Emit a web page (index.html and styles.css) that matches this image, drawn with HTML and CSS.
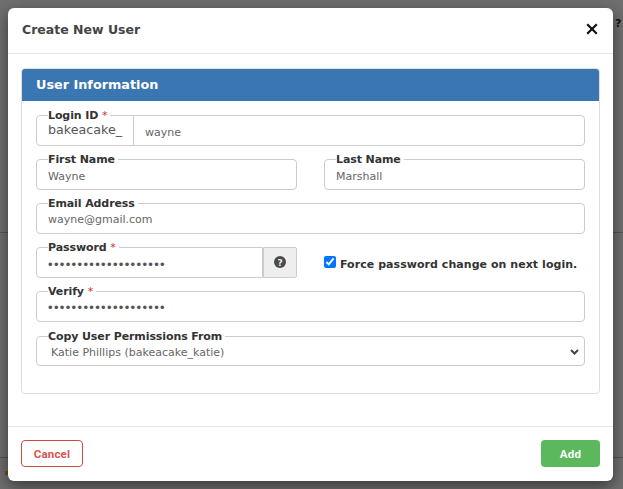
FILE: index.html
```html
<!DOCTYPE html>
<html lang="en">
<head>
    <meta charset="UTF-8">
    <title>Create New User</title>
    <link rel="stylesheet" href="styles.css">
</head>
<body>

    <!-- page behind the dialog -->
    <div class="page-behind">
        <span class="behind-help">?</span>
        <span class="behind-mark"></span>
    </div>

    <div class="modal-backdrop">
        <div class="modal">
            <div class="modal-header">
                <h4>Create New User</h4>
                <button class="close" type="button" aria-label="Close">
                    <svg width="12" height="12" viewBox="0 0 12 12"><path d="M1.2 1.2l9.6 9.6M10.8 1.2l-9.6 9.6" fill="none" stroke="#111" stroke-width="2.2"/></svg>
                </button>
            </div>

            <div class="modal-body">
                <div class="panel">
                    <div class="panel-heading">User Information</div>
                    <div class="panel-body">

                        <fieldset class="field prefix-field">
                            <legend>Login ID <span class="req">*</span></legend>
                            <span class="prefix">bakeacake_</span>
                            <input type="text" value="wayne">
                        </fieldset>

                        <div class="row">
                            <fieldset class="field col">
                                <legend>First Name</legend>
                                <input type="text" value="Wayne">
                            </fieldset>
                            <fieldset class="field col">
                                <legend>Last Name</legend>
                                <input type="text" value="Marshall">
                            </fieldset>
                        </div>

                        <fieldset class="field">
                            <legend>Email Address</legend>
                            <input type="text" value="wayne@gmail.com">
                        </fieldset>

                        <div class="row">
                            <div class="col password-wrap">
                                <fieldset class="field">
                                    <legend>Password <span class="req">*</span></legend>
                                    <input type="password" value="abcdefghijklmnopqrst">
                                </fieldset>
                                <span class="help-addon">
                                    <svg width="12" height="12" viewBox="0 0 12 12"><circle cx="6" cy="6" r="6" fill="#4a4a4a"/><text x="6" y="9.5" text-anchor="middle" class="help-mark">?</text></svg>
                                </span>
                            </div>
                            <label class="col force-change">
                                <input type="checkbox" checked>
                                <span>Force password change on next login.</span>
                            </label>
                        </div>

                        <fieldset class="field">
                            <legend>Verify <span class="req">*</span></legend>
                            <input type="password" value="abcdefghijklmnopqrst">
                        </fieldset>

                        <fieldset class="field select-field">
                            <legend>Copy User Permissions From</legend>
                            <span class="select-value">Katie Phillips (bakeacake_katie)</span>
                            <svg class="chevron" width="9" height="6" viewBox="0 0 9 6"><path d="M1 1l3.5 3.5L8 1" fill="none" stroke="#444" stroke-width="2"/></svg>
                        </fieldset>

                    </div>
                </div>
            </div>

            <div class="modal-footer">
                <button class="btn btn-cancel" type="button">Cancel</button>
                <button class="btn btn-add" type="button">Add</button>
            </div>
        </div>
    </div>

</body>
</html>
```

FILE: styles.css
```css
* {
    box-sizing: border-box;
}

html, body {
    margin: 0;
    height: 489px;
    overflow: hidden;
}

body {
    font-family: "DejaVu Sans", Verdana, sans-serif;
    color: #333;
    background: #fff;
}

.page-behind {
    position: absolute;
    inset: 0;
    background:
        linear-gradient(#555, #555) 0 232px / 100% 1px no-repeat,
        linear-gradient(#555, #555) 0 457px / 100% 1px no-repeat,
        #6f6f6f;
}

.behind-help {
    position: absolute;
    left: 615px;
    top: 17px;
    font-size: 11px;
    font-weight: bold;
    color: #111;
}

.behind-mark {
    position: absolute;
    left: 5px;
    top: 471px;
    width: 3px;
    height: 4px;
    background: #7a4a10;
}

.modal-backdrop {
    position: absolute;
    inset: 0;
    padding: 8px 10px 8px 8px;
}

.modal {
    background: #fff;
    border-radius: 6px;
    height: 473px;
    box-shadow: 0 5px 15px rgba(0, 0, 0, 0.5);
    display: flex;
    flex-direction: column;
}

.modal-header {
    height: 46px;
    padding: 0 15px 2px 14px;
    border-bottom: 1px solid #e5e5e5;
    display: flex;
    align-items: center;
    justify-content: space-between;
}

.modal-header h4 {
    margin: 0;
    font-size: 12.5px;
    font-weight: bold;
    color: #444;
}

.close {
    border: none;
    background: none;
    padding: 0;
    margin-bottom: 2px;
    display: flex;
}

.modal-body {
    flex: 1;
    padding: 14px 13px 0 13px;
}

.panel {
    height: 326px;
    border: 1px solid #ddd;
    border-radius: 4px;
}

.panel-heading {
    height: 32px;
    padding: 0 14px;
    line-height: 31px;
    background: #3a76b1;
    border-radius: 3px 3px 0 0;
    color: #fff;
    font-size: 12.8px;
    font-weight: bold;
}

.panel-body {
    padding: 6px 14px 0 14px;
    display: flex;
    flex-direction: column;
    gap: 5px;
}

.field {
    margin: 0;
    padding: 0 11px;
    min-width: 0;
    height: 39px;
    border: 1px solid #ccc;
    border-radius: 4px;
    display: flex;
    align-items: center;
}

.field legend {
    padding: 2px 3px 0 0;
    font-size: 11px;
    line-height: 14px;
    font-weight: bold;
    color: #333;
    letter-spacing: -0.1px;
}

.req {
    color: #c9302c;
    font-weight: normal;
}

.field input {
    border: none;
    outline: none;
    padding: 0 0 3px;
    width: 100%;
    height: 20px;
    font-family: inherit;
    font-size: 11px;
    color: #666;
    background: transparent;
}

.field input[type="password"] {
    font-family: "Liberation Sans", Arial, sans-serif;
    font-size: 13px;
    letter-spacing: 1.35px;
    color: #555;
}

.prefix-field {
    padding-right: 0;
}

/* reaches up past the legend so the divider meets the top border */
.prefix {
    font-size: 12.7px;
    color: #555;
    flex: none;
    align-self: flex-end;
    width: 86px;
    height: 29px;
    margin-top: -7px;
    line-height: 28px;
    border-right: 1px solid #ccc;
}

.prefix-field input {
    padding-left: 11px;
}

.row {
    display: flex;
    gap: 27px;
}

.col {
    flex: 1;
    min-width: 0;
}

.password-wrap {
    display: flex;
}

.password-wrap .field {
    flex: 1;
    min-width: 0;
    border-radius: 4px 0 0 4px;
}

.help-addon {
    flex: none;
    width: 34px;
    height: 31px;
    padding-bottom: 2px;
    align-self: flex-end;
    background: #eee;
    border: 1px solid #ccc;
    border-radius: 0 2px 2px 0;
    display: flex;
    align-items: center;
    justify-content: center;
}

.help-mark {
    font-size: 9px;
    font-weight: bold;
    fill: #eee;
}

.force-change {
    display: flex;
    align-items: center;
    gap: 4px;
    font-size: 11px;
    letter-spacing: 0.05px;
    font-weight: bold;
    color: #333;
    padding-top: 12px;
    white-space: nowrap;
}

.force-change input {
    margin: 0 0 5px;
    width: 12px;
    height: 12px;
}

.select-field {
    margin-top: 1px;
    height: 38px;
    padding: 2px 5px 0 11px;
    justify-content: space-between;
    font-size: 11px;
    color: #666;
}

.select-value {
    margin-left: 3px;
}

.chevron {
    margin-bottom: 2px;
}

.modal-footer {
    height: 55px;
    padding: 13px 13px 0;
    border-top: 1px solid #e5e5e5;
    display: flex;
    justify-content: space-between;
    align-items: flex-start;
}

.btn {
    height: 27px;
    border-radius: 4px;
    font-family: Roboto, "Liberation Sans", sans-serif;
    font-size: 11.5px;
    font-weight: bold;
    letter-spacing: 0.2px;
}

.btn-cancel {
    width: 62px;
    background: #fff;
    border: 1px solid #cf4a46;
    color: #d9534f;
}

.btn-add {
    width: 59px;
    background: #5cb85c;
    border: none;
    color: #fff;
}
```
